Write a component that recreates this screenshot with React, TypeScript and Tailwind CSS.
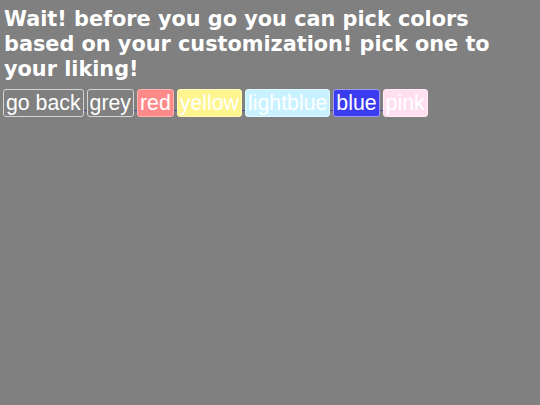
const swatches = [
  { label: "go back", cls: "bg-transparent border-[#d4d4d4]" },
  { label: "grey", cls: "bg-[#808080] border-[#d4d4d4]" },
  { label: "red", cls: "bg-[#ff8a8a] border-[#ffb0b0]" },
  { label: "yellow", cls: "bg-[#fff58e] border-[#fff8b8]" },
  { label: "lightblue", cls: "bg-[#c8f2ff] border-[#e0f8ff]" },
  { label: "blue", cls: "bg-[#3b3bf0] border-[#9a9af0]" },
  { label: "pink", cls: "bg-[#ffdff0] border-[#ffeaf5]" },
];

export default function App() {
  return (
    <div className="min-h-[405px] w-[540px] bg-[#808080] px-[3px] pt-[7px]">
      <h1 className="pl-px font-['DejaVu_Sans',Verdana,sans-serif] text-[20.8px] font-bold leading-[25px] text-white">
        Wait! before you go you can pick colors based on your customization! pick one to your liking!
      </h1>
      <div className="mt-[7px] flex flex-wrap items-center">
        {swatches.map((s, i) => (
          <a key={s.label} href="#" className="flex items-end">
            <button
              type="button"
              className={`rounded-[3px] border px-[2px] font-['Liberation_Sans',Arial,sans-serif] text-[21.3px] leading-[26px] text-white ${s.cls}`}
            >
              {s.label}
            </button>
            {i < swatches.length - 1 && (
              <span className="mb-[6px] inline-block h-px w-[3px] bg-[#4a4aa8]" />
            )}
          </a>
        ))}
      </div>
    </div>
  );
}
